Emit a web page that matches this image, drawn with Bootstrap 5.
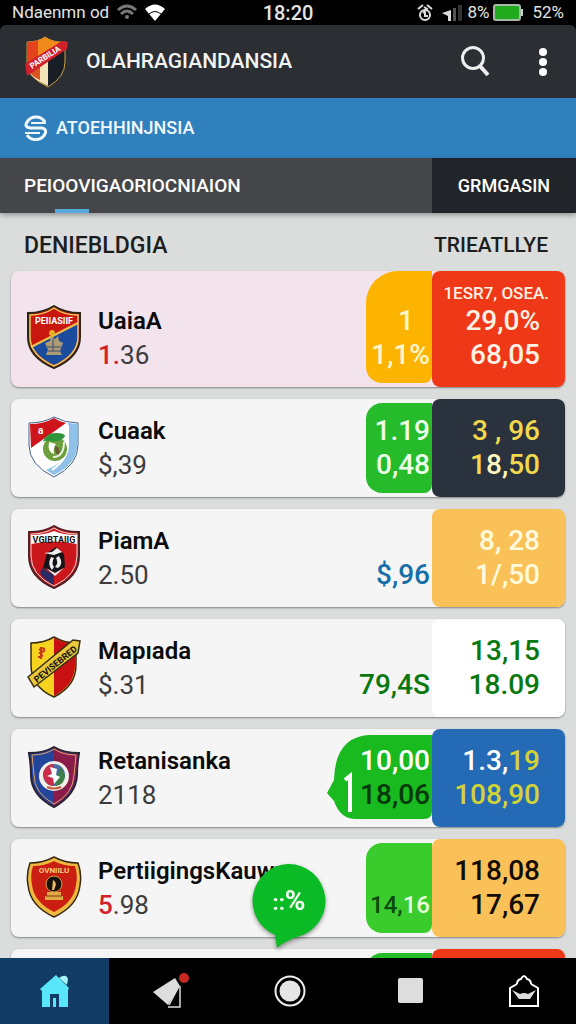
<!DOCTYPE html>
<html lang="id">
<head>
<meta charset="utf-8">
<meta name="viewport" content="width=device-width, initial-scale=1">
<title>Olahraga</title>
<link href="https://cdn.jsdelivr.net/npm/bootstrap@5.3.0/dist/css/bootstrap.min.css" rel="stylesheet">
<style>
  body { font-family: Roboto, "Liberation Sans", sans-serif; background: #dadddc; color: #0b0b0b; font-weight: 500; line-height: 1; }
  button { border: 0; background: none; padding: 0; color: inherit; line-height: 1; }
  a { color: inherit; text-decoration: none; }
  svg { display: block; flex: none; }
  .statusbar, .topbar, .bluebar, .tabbar, .bottomnav, .match, .heads { flex-shrink: 0; }
  .statusbar { background: #000; color: #e4e4e4; height: 25px; font-size: 17px; font-weight: 400; padding: 0 12px; }
  .clock { left: 50%; transform: translateX(-50%); font-size: 20px; font-weight: 500; }
  .appbar { background: #2b2e33; height: 73px; border-radius: 6px 6px 0 0; padding: 0 28px 0 24px; color: #f3f4f4; }
  .apptitle { font-size: 21px; font-weight: 500; }
  .bluebar { background: #3180be; height: 60px; padding: 0 24px; color: #f0f8fd; font-size: 18px; }
  .tabbar { height: 55px; color: #fff; font-size: 18px; box-shadow: 0 2px 5px #0005; }
  .tab-main { background: #454649; padding-left: 24px; font-size: 19px; }
  .tab-main::after { content: ""; position: absolute; left: 55px; bottom: 0; width: 34px; height: 4px; background: #55aadb; }
  .tab-side { background: #212529; width: 144px; }
  .heads { height: 58px; padding: 8px 28px 0 24px; font-size: 23px; color: #1c1e1e; }
  .heads h2 { font-size: inherit; font-weight: 500; }
  .heads .second { font-size: 21px; }
  .rows { padding: 0 11px; gap: 12px; }
  .match { height: 98px; background: #f5f5f5; border-radius: 8px; box-shadow: 0 1px 2px #0006; }
  .match.hot { height: 116px; background: #f2e3ec; }
  .crest { padding: 0 0 18px 15px; }
  .team { padding: 0 0 15px 16px; min-width: 0; }
  .team h3 { font-size: 24px; font-weight: 600; line-height: 34px; white-space: nowrap; }
  .team p { font-size: 26px; font-weight: 400; line-height: 34px; color: #3c3c3e; }
  .team b { font-weight: 500; color: #d3202b; }
  .mid, .odds { font-size: 28px; line-height: 34px; text-align: right; white-space: nowrap; flex: none; }
  .mid { width: 66px; margin: 4px 0; padding: 0 2px 11px 0; border-radius: 16px 0 8px 16px; }
  .odds { width: 133px; padding: 0 25px 15px 0; border-radius: 8px; }
  .hot .mid { border-top-left-radius: 32px; margin-top: 0; }
  .tag-line { font-size: 17px; line-height: 22px; margin-right: -9px; }
  .c-amber { background: #fdb400; color: #fff6cd; }
  .c-green { background: #25bb2b; color: #ecffe8; }
  .c-lime { background: #3acb2d; color: #0c4a0c; font-size: 24px; }
  .c-red { background: #ef3817; color: #fff1e4; }
  .c-navy { background: #2a323d; color: #f2d84d; }
  .c-sand { background: #fac158; color: #fffbdc; }
  .c-white { background: #fff; color: #08780f; }
  .c-blue { background: #246ab5; color: #fff; }
  .ink { color: #130c04; }
  .t-blue { color: #166fa8; } .t-green { color: #08780f; } .t-dark { color: #06390a; }
  .t-yellow { color: #d3d335; } .t-cream { color: #fff6c0; } .t-white { color: #e6ffdc; }
  .speech svg { right: 0; top: 2px; }
  .speech { width: 105px; color: #fff; }
  .speech div { position: relative; }
  .fab { left: 50%; bottom: 10px; margin-left: -37px; width: 76px; height: 84px; color: #f0fff0; filter: drop-shadow(0 2px 2px #0006); }
  .fab svg { left: 0; top: 0; }
  .fab span { position: relative; font-size: 28px; font-weight: 700; line-height: 74px; }
  .fab i { font-size: 22px; font-style: normal; }
  .bottomnav { background: #000; height: 66px; color: #e6e6e6; }
  .bottomnav a { flex: 1 1 0; }
  .bottomnav a.active { flex: 0 0 19%; background: #123c66; }
</style>
</head>
<body class="vh-100 d-flex flex-column overflow-hidden">

<div class="statusbar d-flex align-items-center justify-content-between position-relative">
  <div class="d-flex align-items-center gap-2">
    <span>Ndaenmn od</span>
    <svg width="20" height="17" viewBox="0 0 20 17" fill="none" stroke="#777" stroke-width="3"><path d="M1 6Q10-2 19 6M4 10Q10 4 16 10"/><circle cx="10" cy="13" r="2" fill="#777" stroke="none"/></svg>
    <svg width="20" height="17" viewBox="0 0 20 17"><path d="M0 5Q10-4 20 5L10 17Z" fill="#fff"/><path d="M4 10Q10 5 16 10" fill="none" stroke="#000"/></svg>
  </div>
  <span class="clock position-absolute">18:20</span>
  <div class="d-flex align-items-center gap-1">
    <svg width="16" height="18" viewBox="0 0 16 18" fill="none" stroke="#ddd" stroke-width="2"><path d="M1 5L6 1M10 1l5 4M7 3l3 2-4 4"/><circle cx="8" cy="11" r="5"/><path d="M8 8v4h3"/></svg>
    <svg class="ms-1" width="22" height="17" viewBox="0 0 22 17"><path d="M1 9l9-3v11H7v-5z" fill="#ddd"/><path d="M12 4h3v13h-3z" fill="#555"/><path d="M17 1h4v16h-4z" fill="#333"/></svg>
    <span>8%</span>
    <svg width="31" height="17" viewBox="0 0 31 17"><rect x="1" y="1" width="26" height="15" rx="2" fill="#20ab1e" stroke="#a9b9a8" stroke-width="2"/><path d="M28 5h2v7h-2z" fill="#ccc"/></svg>
    <span class="ms-1">52%</span>
  </div>
</div>

<header class="topbar bg-black">
  <div class="appbar d-flex align-items-center">
    <svg width="46" height="52" viewBox="0 0 46 52">
      <path d="M3 6Q14 6 21 1q9 6 20 5v20q0 15-17 25Q4 42 3 26z" fill="#191d25" stroke="#c9a345"/>
      <path d="M3 6Q14 6 21 1q9 6 18 5L3 34z" fill="#f08a1d"/><path d="M3 6q8 0 11-2v26H3z" fill="#e3421c"/>
      <path d="M4 35l20-11v26Q8 43 4 35z" fill="#f4e3b8"/><path d="M4 33l12-7v18Q6 40 4 33z" fill="#d9541e"/>
      <path d="M1 28L38 5l6 1-1 7L3 40z" fill="#d0202c"/>
      <text x="8" y="33" font-size="8" font-weight="700" fill="#fff" transform="rotate(-33 8 33)">PARBILIA</text>
    </svg>
    <h1 class="apptitle mb-0 ms-3 flex-grow-1">OLAHRAGIANDANSIA</h1>
    <button type="button" aria-label="Cari"><svg width="30" height="32" viewBox="0 0 30 32" fill="none" stroke="#eee" stroke-width="3"><circle cx="13" cy="12" r="10.500"/><path d="M20 20l8 9" stroke-width="4"/></svg></button>
    <button type="button" aria-label="Menu" class="ms-5"><svg width="10" height="30" viewBox="0 0 10 30" fill="#fff"><circle cx="5" cy="5" r="4"/><circle cx="5" cy="15" r="4"/><circle cx="5" cy="25" r="4"/></svg></button>
  </div>
</header>
<div class="bluebar d-flex align-items-center gap-2">
  <svg width="24" height="26" viewBox="0 0 24 26" fill="none" stroke="#f0f8fd" stroke-width="3"><path d="M21 7A10.500 10.500 0 0 0 3 7Q0 12 6 13h12q5 1 3 6A10.500 10.500 0 0 1 3 20"/><path d="M7 8h15M1 18h15" stroke-width="2"/></svg>
  <span>ATOEHHINJNSIA</span>
</div>
<nav class="tabbar d-flex position-relative">
  <a href="#" class="tab-main position-relative flex-grow-1 d-flex align-items-center">PEIOOVIGAORIOCNIAION</a>
  <a href="#" class="tab-side d-flex align-items-center justify-content-center">GRMGASIN</a>
</nav>

<main class="flex-grow-1 overflow-hidden position-relative">
  <div class="heads d-flex align-items-center justify-content-between">
    <h2 class="mb-0">DENIEBLDGIA</h2><h2 class="second mb-0">TRIEATLLYE</h2>
  </div>
  <div class="rows d-flex flex-column">

    <article class="match hot d-flex">
      <div class="crest d-flex align-items-end"><svg width="56" height="64" viewBox="0 0 56 64">
        <path d="M2 8Q17 8 28 1q11 7 26 7v24Q54 52 28 63 2 52 2 32z" fill="#c9170f" stroke="#2b2417" stroke-width="2"/>
        <path d="M52 19v13q0 18-24 28Q12 53 6 42z" fill="#1b4b9c"/><path d="M5 42L52 18" stroke="#efc04a" stroke-width="2"/>
        <path d="M4 10q14 0 24-7 10 7 24 7v22Q52 50 28 61 4 50 4 32z" fill="none" stroke="#eec858" stroke-width="1.500"/>
        <text x="28" y="19" font-size="9" font-weight="700" text-anchor="middle" fill="#fff">PEIIASIIF</text>
        <path d="M19 38l5-2 1-5 4 3 3-3 1 5 4 2-3 8 2 4H20l2-5z" fill="#ad9b75"/><circle cx="26" cy="28" r="3" fill="#e9ae25"/><path d="M21 42h14M22 46h12M27 34v12" stroke="#3a4d78"/>
      </svg></div>
      <div class="team flex-grow-1 d-flex flex-column justify-content-end"><h3 class="mb-0">UaiaA</h3><p class="mb-0"><b>1.</b>36</p></div>
      <div class="mid c-amber d-flex flex-column justify-content-end"><div class="pe-3">1</div><div>1,1%</div></div>
      <div class="odds c-red d-flex flex-column justify-content-end"><div class="tag-line">1ESR7, OSEA.</div><div>29,0%</div><div>68,05</div></div>
    </article>

    <article class="match d-flex">
      <div class="crest d-flex align-items-end"><svg width="56" height="64" viewBox="0 0 56 64">
        <path d="M3 8Q17 8 28 2q11 6 24 6v22Q52 50 28 62 3 50 3 30z" fill="#fff" stroke="#42638a"/>
        <path d="M42 8l9 1v21q0 19-23 30l-8-5q24-10 22-25z" fill="#8fc1e8"/><path d="M42 10v20q0 14-16 25" fill="none" stroke="#fff" stroke-width="2"/>
        <path d="M4 9q14 0 24-6 6 4 12 5L5 33z" fill="#cf151c"/><text x="12" y="19" font-size="10" font-weight="700" fill="#fff">a</text>
        <circle cx="29" cy="34" r="12" fill="#6c9e3d"/><path d="M17 27q2-9 13-9 9 0 9 3-3 6-12 5-8-1-10 1z" fill="#2f953d"/><path d="M23 27q-2 10 5 12-1-6 2-10z" fill="#fff"/><path d="M29 31q6 1 4 9-5-2-4-9z" fill="#6c5a35"/><path d="M38 27q0 15-11 15" fill="none" stroke="#e8f0e0" stroke-width="2"/>
      </svg></div>
      <div class="team flex-grow-1 d-flex flex-column justify-content-end"><h3 class="mb-0">Cuaak</h3><p class="mb-0">$,39</p></div>
      <div class="mid c-green d-flex flex-column justify-content-end"><div>1.19</div><div>0,48</div></div>
      <div class="odds c-navy d-flex flex-column justify-content-end"><div>3 , 96</div><div>1<span class="t-cream">8,</span>50</div></div>
    </article>

    <article class="match d-flex">
      <div class="crest d-flex align-items-end"><svg width="56" height="64" viewBox="0 0 56 64">
        <path d="M3 7Q18 7 28 1q10 6 25 6v24Q53 52 28 63 3 52 3 31z" fill="#cb171b" stroke="#502025" stroke-width="2"/>
        <path d="M5 9q14 0 23-6 9 6 23 6v22q0 19-23 30Q5 50 5 31z" fill="none" stroke="#f3d8d2"/>
        <path d="M5 10q14 0 23-4 9 4 23 4v9q-23-5-46 0z" fill="#fff"/>
        <text x="28" y="18" font-size="9" font-weight="700" text-anchor="middle" fill="#111">VGIBTAIIG</text>
        <path d="M17 43l4-15 9-6 8 7 1 13-10 6z" fill="#151418"/><path d="M16 43l12 7v10q-9-4-14-12z" fill="#2b2b64"/><path d="M18 28l8-1 5-4 5 4-8 3zM25 32q-4 8 1 13l2-3q-3-4 0-9zM33 31q5 8-1 12l-3-1q4-4 1-9zM20 43l9 5 9-5-9 8z" fill="#eee"/>
      </svg></div>
      <div class="team flex-grow-1 d-flex flex-column justify-content-end"><h3 class="mb-0">PiamA</h3><p class="mb-0">2.50</p></div>
      <div class="mid t-blue d-flex flex-column justify-content-end"><div>$,96</div></div>
      <div class="odds c-sand d-flex flex-column justify-content-end"><div>8, 28</div><div>1/,50</div></div>
    </article>

    <article class="match d-flex">
      <div class="crest d-flex align-items-end"><svg width="56" height="64" viewBox="0 0 56 64">
        <path d="M5 8Q18 8 28 2q10 6 22 6v22Q50 51 28 62 5 52 5 30z" fill="#f6d31e" stroke="#372d12" stroke-width="1.500"/>
        <path d="M28 3q10 5 21 6v21q0 20-21 31z" fill="#c91010"/><path d="M13 15q6-4 5 1l-4 2q5 4-2 4M15 12v12" fill="none" stroke="#c5391b" stroke-width="2"/>
        <path d="M2 42L47 5l7 1-2 12L8 52z" fill="#ecc83c" stroke="#372d12" stroke-width="1.500"/>
        <text x="11" y="48" font-size="9" font-weight="700" fill="#111" transform="rotate(-39 11 48)">PEVISEBRED</text>
      </svg></div>
      <div class="team flex-grow-1 d-flex flex-column justify-content-end"><h3 class="mb-0">Mapıada</h3><p class="mb-0">$.31</p></div>
      <div class="mid t-green d-flex flex-column justify-content-end align-items-end"><div>79,4S</div></div>
      <div class="odds c-white d-flex flex-column justify-content-end"><div>13,15</div><div>18.09</div></div>
    </article>

    <article class="match d-flex">
      <div class="crest d-flex align-items-end"><svg width="56" height="64" viewBox="0 0 56 64">
        <path d="M3 8Q18 8 28 2q10 6 25 6-2 12-2 22-1 20-23 32Q5 50 5 30 5 20 3 8z" fill="#23469c" stroke="#2b2233" stroke-width="2"/>
        <path d="M28 3q10 6 24 6l-2 21q-2 19-22 31z" fill="#8a1c4a"/><path d="M6 10q13 0 22-6 9 6 22 6-1 11-2 20-1 19-20 29Q8 48 8 30z" fill="none" stroke="#e3a06a"/>
        <circle cx="28" cy="31" r="15" fill="#f2efe7"/><circle cx="28" cy="30" r="11" fill="#4a6aa8"/><path d="M17 30a11 11 0 0 1 11-11v22q-6 0-9-5z" fill="#c92d4c"/><path d="M29 41q10-1 10-11l-5-8z" fill="#3c8047"/><path d="M24 22l7 2-1 6 4 2-6 7-1-6-6-2 5-2z" fill="#fff"/><path d="M21 42q7 3 14 0" fill="none" stroke="#c05b35" stroke-width="2"/>
      </svg></div>
      <div class="team flex-grow-1 d-flex flex-column justify-content-end"><h3 class="mb-0">Retanisanka</h3><p class="mb-0">2118</p></div>
      <div class="mid speech position-relative d-flex flex-column justify-content-end">
        <svg class="position-absolute" width="105" height="84" viewBox="0 0 105 84"><path d="M105 0H42Q8 2 7 45L0 58l7 8q6 18 22 18h68q8 0 8-8z" fill="#19b920"/><path d="M18 45l5-4v36" fill="none" stroke="#fff" stroke-width="4"/></svg>
        <div>10,00</div><div class="t-dark">18,06</div>
      </div>
      <div class="odds c-blue d-flex flex-column justify-content-end"><div>1.3,<span class="t-yellow">19</span></div><div class="t-yellow">108,90</div></div>
    </article>

    <article class="match d-flex">
      <div class="crest d-flex align-items-end"><svg width="56" height="64" viewBox="0 0 56 64">
        <path d="M4 8Q17 8 28 2q11 6 24 6 4 11 2 22Q52 51 28 62 4 51 2 30 0 19 4 8z" fill="#efb83e" stroke="#382812" stroke-width="1.500"/>
        <path d="M7 11q12 0 21-5 9 5 21 5 3 10 1 19-2 17-22 27Q8 47 6 30 4 20 7 11z" fill="#cb1e12"/>
        <text x="28" y="18" font-size="8" font-weight="700" text-anchor="middle" fill="#f7cc7e">OVNIILU</text>
        <circle cx="28" cy="29" r="8" fill="#17120c" stroke="#d49d38"/><path d="M27 25q5 2 1 10h-2z" fill="#e8bb68"/><path d="M21 37h14v4h2v4H19v-4h2z" fill="#e0aa42"/><path d="M20 41h16" stroke="#7a3413"/>
      </svg></div>
      <div class="team flex-grow-1 d-flex flex-column justify-content-end"><h3 class="mb-0">PertiigingsKauwu</h3><p class="mb-0"><b>5</b>.98</p></div>
      <div class="mid c-lime d-flex flex-column justify-content-end align-items-end"><div>14,<span class="t-white">16</span></div></div>
      <div class="odds c-sand ink d-flex flex-column justify-content-end"><div>118,08</div><div>17,67</div></div>
    </article>

    <article class="match d-flex">
      <div class="crest"><svg class="mt-2" width="56" height="64" viewBox="0 0 56 64"><path d="M4 8Q17 8 28 2q11 6 24 6v22Q52 51 28 62 4 51 4 30z" fill="#b9a53c" stroke="#382812" stroke-width="2"/></svg></div>
      <div class="team flex-grow-1"></div>
      <div class="mid c-green"></div>
      <div class="odds c-red"></div>
    </article>
  </div>

  <button type="button" class="fab position-absolute text-center d-flex justify-content-center align-items-start">
    <svg class="position-absolute" width="76" height="84" viewBox="0 0 76 84"><path d="M37 0a37 37 0 0 1 9 73q-12 4-20 11l-2-13A37 37 0 0 1 37 0z" fill="#0bbb25"/></svg>
    <span><i>::</i>%</span>
  </button>
</main>

<nav class="bottomnav d-flex">
  <a href="#" class="active d-flex align-items-center justify-content-center" aria-label="Beranda"><svg width="30" height="34" viewBox="0 0 30 34" fill="#59e6fa"><path d="M0 15L16 1l13 13-1 2v17h-9V20h-9v13H2V17z"/><path d="M19 4q7-5 9 1l-1 6z" fill="#a6f4fa"/><path d="M13 24h3v9h-3z"/></svg></a>
  <a href="#" class="d-flex align-items-center justify-content-center ps-2" aria-label="Berita"><svg width="38" height="36" viewBox="0 0 38 36"><path d="M2 19L24 5l5 8-12 19z" fill="#ddd"/><path d="M29 13v21H17M27 15l-9 17" fill="none" stroke="#ddd" stroke-width="1.500"/><circle cx="33" cy="5" r="5" fill="#c82820"/></svg></a>
  <a href="#" class="d-flex align-items-center justify-content-center ps-3" aria-label="Utama"><svg width="32" height="34" viewBox="0 0 32 34"><circle cx="16" cy="17" r="14.500" fill="none" stroke="#eee" stroke-width="2"/><circle cx="16" cy="17" r="10.500" fill="#e6e6e6"/></svg></a>
  <a href="#" class="d-flex align-items-center justify-content-center ps-3" aria-label="Terbaru"><svg width="26" height="26" viewBox="0 0 26 26"><rect width="25" height="25" rx="2" fill="#ddd"/></svg></a>
  <a href="#" class="d-flex align-items-center justify-content-center ps-2" aria-label="Pesan"><svg width="30" height="34" viewBox="0 0 30 34" fill="none" stroke="#fff" stroke-width="2"><path d="M8 10L1 14v18h28V14l-7-4"/><path d="M8 10q0-4 4-5 3-6 6 0 4 1 4 5"/><path d="M3 16l8 4q4-2 8 0l8-4-6 9H10z" fill="#ddd" stroke="none"/></svg></a>
</nav>
<script src="https://cdn.jsdelivr.net/npm/bootstrap@5.3.0/dist/js/bootstrap.bundle.min.js"></script>
</body>
</html>
